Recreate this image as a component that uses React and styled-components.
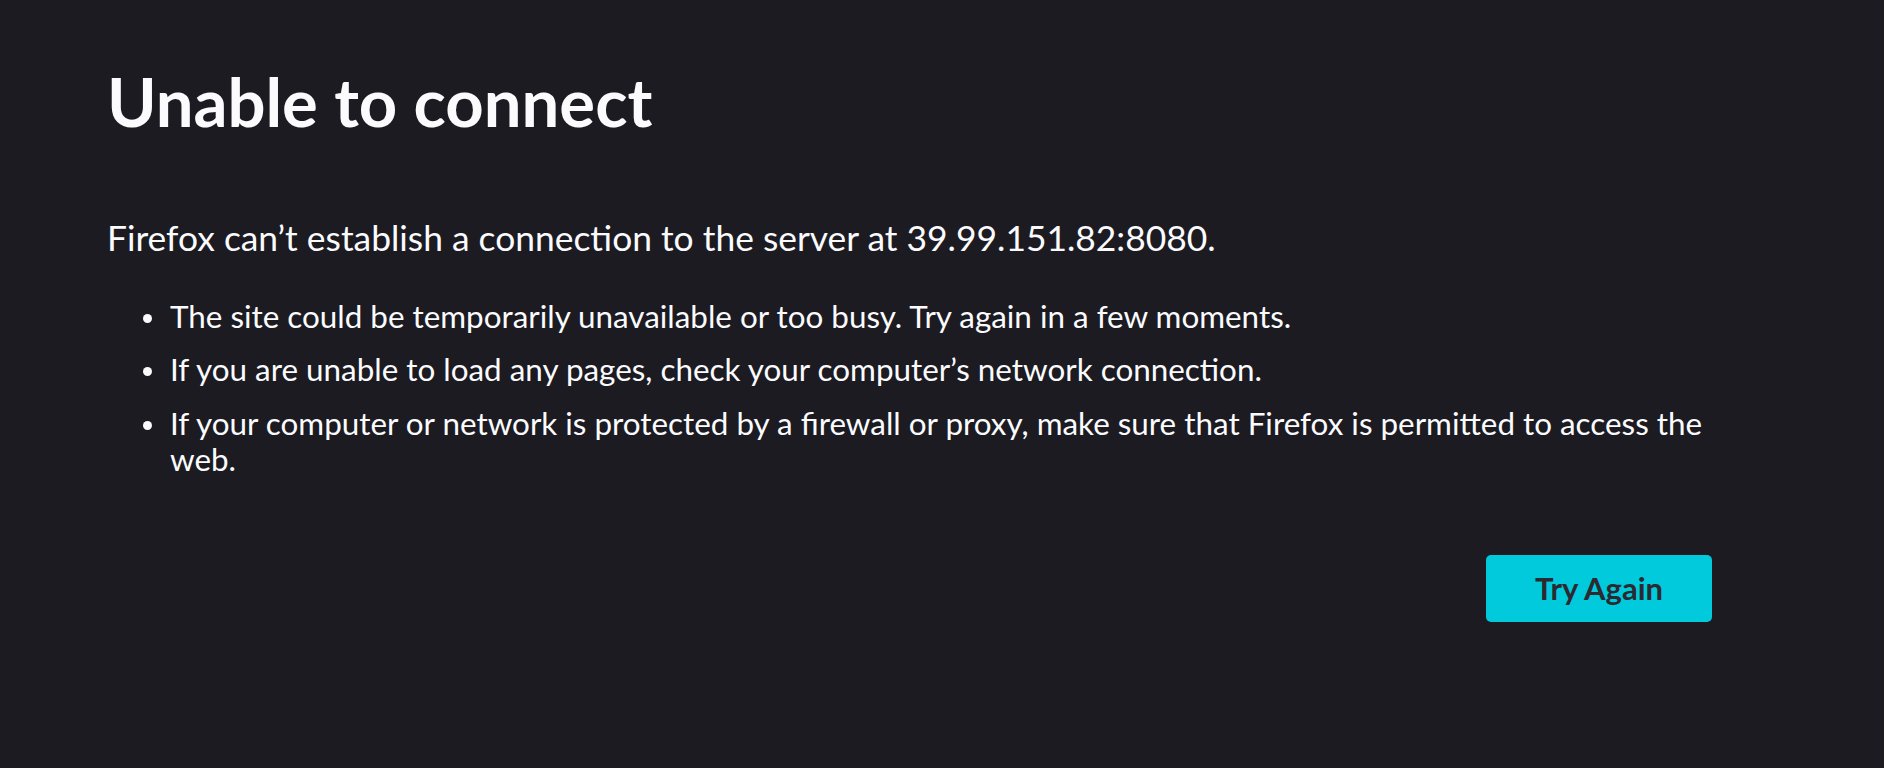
import React from 'react'
import styled, {createGlobalStyle} from 'styled-components'

const GlobalStyle = createGlobalStyle`
  html, body {
    margin: 0;
    padding: 0;
    background: #1c1b22;
  }
  body {
    font-family: Lato, "Open Sans", sans-serif;
    color: #fbfbfe;
  }
`

const Page = styled.main`
  box-sizing: border-box;
  min-height: 768px;
  padding: 61px 0 0 107px;
`

const Container = styled.div`
  width: 1605px;
  display: flex;
  flex-direction: column;
`

const Title = styled.h1`
  margin: 0;
  font-size: 67px;
  line-height: 1.2;
  font-weight: 700;
`

const Intro = styled.p`
  margin: 78.5px 0 0;
  font-size: 35.4px;
  line-height: 36px;
`

const List = styled.ul`
  list-style: none;
  margin: 42.3px -24px 0 0;
  padding: 0;
  display: flex;
  flex-direction: column;
  gap: 17.3px;
`

const Item = styled.li`
  display: grid;
  grid-template-columns: 63px 1fr;
  font-size: 31.4px;
  line-height: 36px;

  &::before {
    content: "";
    width: 9px;
    height: 9px;
    border-radius: 50%;
    background: #fbfbfe;
    margin: 16px 0 0 35.5px;
  }
`

const Actions = styled.div`
  display: flex;
  justify-content: flex-end;
  margin-top: 78px;
`

const Button = styled.button`
  width: 226px;
  height: 67px;
  border: none;
  border-radius: 5px;
  background: #00cadb;
  color: #2b2a33;
  font-family: Lato, "Open Sans", sans-serif;
  font-size: 31px;
  font-weight: 700;
  cursor: pointer;
`

const reasons = [
    'The site could be temporarily unavailable or too busy. Try again in a few moments.',
    'If you are unable to load any pages, check your computer’s network connection.',
    'If your computer or network is protected by a firewall or proxy, make sure that Firefox is permitted to access the web.',
]

function App() {
    return (
        <Page>
            <GlobalStyle/>
            <Container>
                <Title>Unable to connect</Title>
                <Intro>Firefox can’t establish a connection to the server at 39.99.151.82:8080.</Intro>
                <List>
                    {reasons.map(text => <Item key={text}>{text}</Item>)}
                </List>
                <Actions>
                    <Button>Try Again</Button>
                </Actions>
            </Container>
        </Page>
    )
}

export default App
